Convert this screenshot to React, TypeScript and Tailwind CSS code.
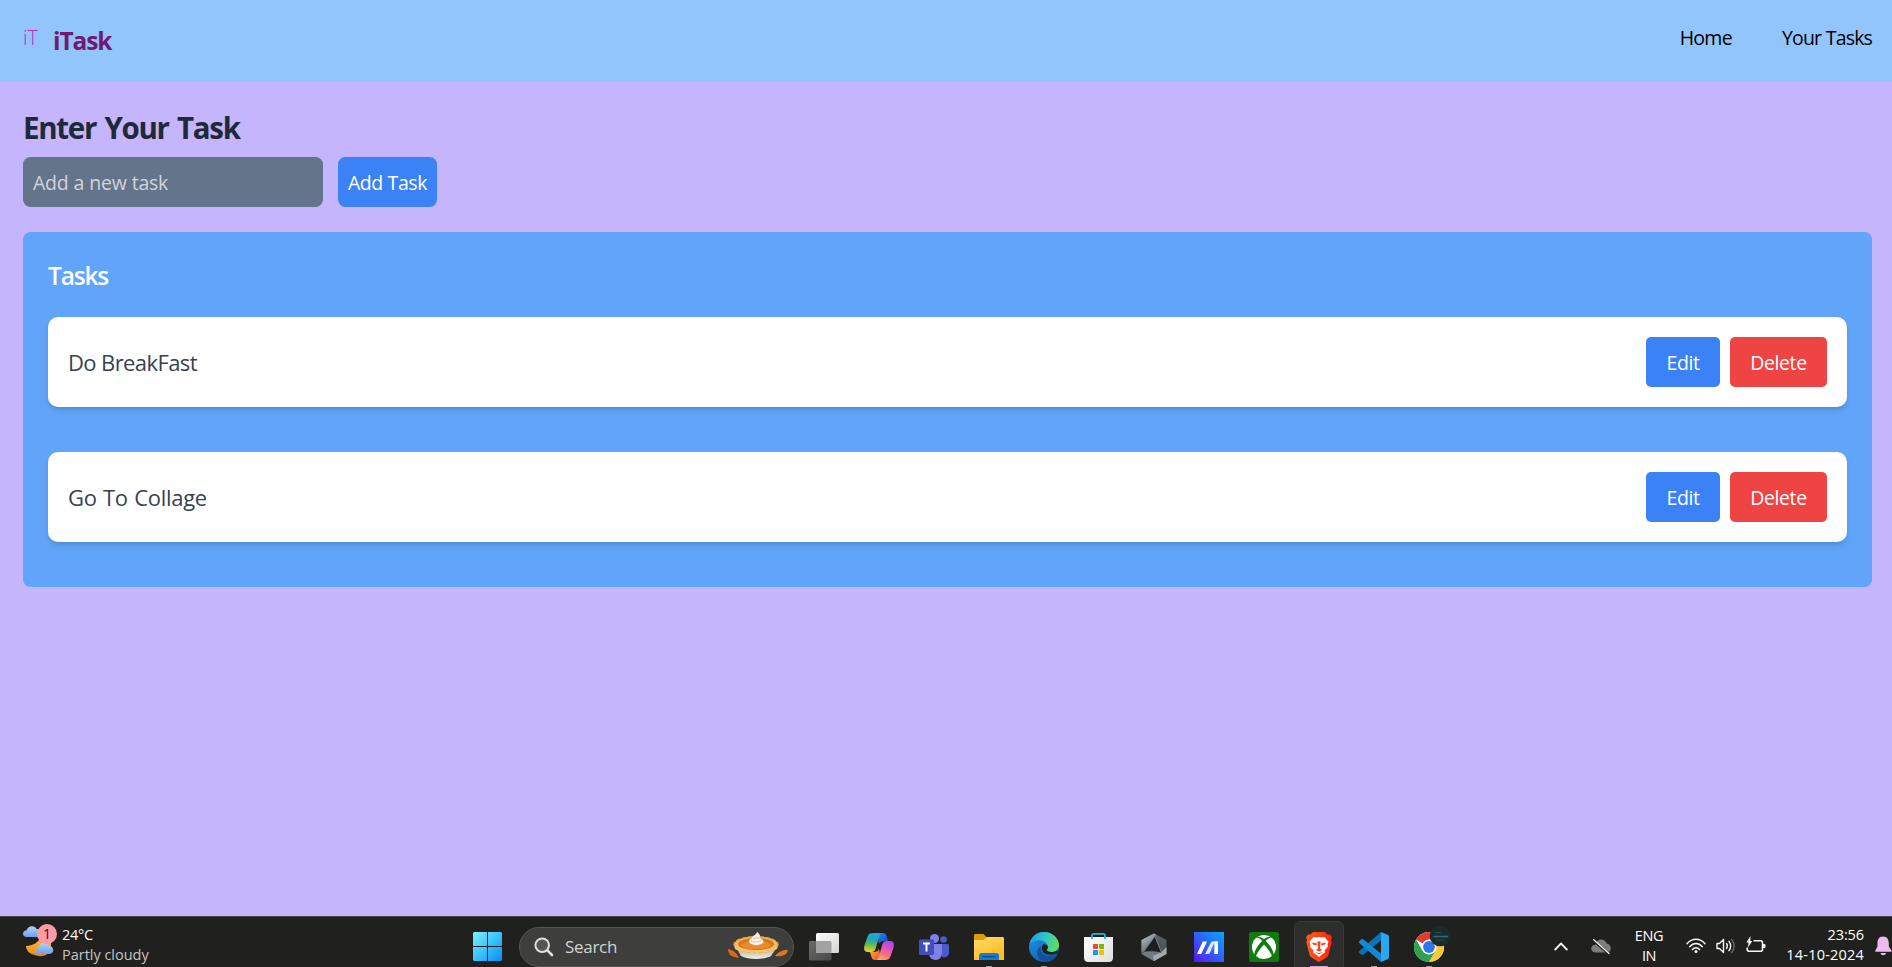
import { useState } from "react";
import type { ReactNode } from "react";

type Task = { id: number; title: string };

const initialTasks: Task[] = [
  { id: 1, title: "Do BreakFast" },
  { id: 2, title: "Go To Collage" },
];

function Navbar() {
  return (
    <nav className="flex h-[82px] shrink-0 justify-between bg-[#93c5fd] pl-[23px] pr-5">
      <div className="flex">
        <span className="w-[30px] pt-[23px] text-[20px] leading-[30px] font-light tracking-[-0.1px] text-[#c026d3]">iT</span>
        <span className="pt-[23px] text-[24.5px] leading-[35px] font-bold tracking-[-1.1px] text-[#701a75]">iTask</span>
      </div>
      <ul className="flex gap-[50px] pt-[23px] text-[19.5px] leading-[30px] text-black">
        <li className="tracking-[-0.7px]">Home</li>
        <li className="tracking-[-0.85px] [word-spacing:0.5px]">Your Tasks</li>
      </ul>
    </nav>
  );
}

function TaskRow({ task, onDelete }: { task: Task; onDelete: () => void }) {
  return (
    <li className="group flex h-[90px] items-center justify-between rounded-[10px] bg-white px-5 shadow-[0_5px_7.5px_-1px_rgba(0,0,0,0.1),0_2.5px_5px_-2.5px_rgba(0,0,0,0.1)]">
      <span className="text-[22px] leading-[35px] tracking-[-0.6px] text-[#374151] group-even:tracking-[-0.3px] group-even:[word-spacing:1px]">
        {task.title}
      </span>
      <div className="flex gap-2.5 text-[19.5px] text-white">
        <button className="h-[50px] w-[74px] rounded-[5px] bg-[#3b82f6] pt-[2px] tracking-[-0.4px]">Edit</button>
        <button className="h-[50px] w-[97px] rounded-[5px] bg-[#ef4444] pt-[2px] tracking-[-0.4px]" onClick={onDelete}>
          Delete
        </button>
      </div>
    </li>
  );
}

function Cell({ children, running = false, active = false }: { children: ReactNode; running?: boolean; active?: boolean }) {
  return (
    <div className="relative flex h-[50px] w-[55px] shrink-0 items-center pt-[10px] pl-[13px]">
      {active && <div className="absolute top-[4px] left-[3px] h-[50px] w-[50px] rounded-[6px] border border-[#3a3a38] bg-[#2d2d2b]" />}
      <svg viewBox="0 0 30 30" className="relative h-[30px] w-[30px] overflow-visible">
        {children}
      </svg>
      {running && <div className="absolute bottom-0 left-[25px] h-[1px] w-[6px] bg-[#9b9b9b]" />}
      {active && <div className="absolute bottom-0 left-[19px] h-[1px] w-[18px] bg-[#d59be0]" />}
    </div>
  );
}

function Gradients() {
  return (
    <svg className="absolute h-0 w-0">
      <defs>
        <linearGradient id="win" x1="0" y1="0" x2="29" y2="29" gradientUnits="userSpaceOnUse">
          <stop offset="0" stopColor="#7df0ff" /><stop offset="0.5" stopColor="#38c4fb" /><stop offset="1" stopColor="#0a8cf5" />
        </linearGradient>
        <linearGradient id="view" x1="0" y1="0" x2="1" y2="1"><stop offset="0" stopColor="#fff" /><stop offset="1" stopColor="#d4d4d4" /></linearGradient>
        <linearGradient id="viewBack" x1="0" y1="0" x2="1" y2="1"><stop offset="0" stopColor="#6c6c6c" /><stop offset="1" stopColor="#484848" /></linearGradient>
        <linearGradient id="copA" x1="0.4" y1="0" x2="0.3" y2="1">
          <stop offset="0" stopColor="#1ca4ee" /><stop offset="0.35" stopColor="#24a6b4" /><stop offset="0.65" stopColor="#6cbd4b" /><stop offset="1" stopColor="#f5d21c" />
        </linearGradient>
        <linearGradient id="copB" x1="0.7" y1="0" x2="0.3" y2="1">
          <stop offset="0" stopColor="#a34bea" /><stop offset="0.4" stopColor="#e554b6" /><stop offset="0.75" stopColor="#fb7576" /><stop offset="1" stopColor="#ffad61" />
        </linearGradient>
        <linearGradient id="copC" x1="0" y1="0" x2="1" y2="1"><stop offset="0" stopColor="#1b8fe8" /><stop offset="1" stopColor="#2140c9" /></linearGradient>
        <linearGradient id="copD" x1="0" y1="0" x2="1" y2="1"><stop offset="0" stopColor="#ffb12a" /><stop offset="1" stopColor="#ee4a3a" /></linearGradient>
        <linearGradient id="folder" x1="0" y1="0" x2="0.6" y2="1"><stop offset="0" stopColor="#ffdc6b" /><stop offset="1" stopColor="#fdbb1e" /></linearGradient>
        <linearGradient id="edgeTop" x1="0" y1="0.3" x2="1" y2="0.5"><stop offset="0" stopColor="#1d9de2" /><stop offset="0.5" stopColor="#2fc5c8" /><stop offset="1" stopColor="#66dc56" /></linearGradient>
        <linearGradient id="edgeLow" x1="0" y1="0" x2="0.6" y2="1"><stop offset="0" stopColor="#1f9be4" /><stop offset="1" stopColor="#0e5fb4" /></linearGradient>
        <linearGradient id="bag" x1="0" y1="0" x2="1" y2="1"><stop offset="0" stopColor="#fff" /><stop offset="1" stopColor="#dedede" /></linearGradient>
        <linearGradient id="hexA" x1="0" y1="0" x2="0" y2="1"><stop offset="0" stopColor="#5c6267" /><stop offset="0.6" stopColor="#4b5055" /><stop offset="1" stopColor="#8a929a" /></linearGradient>
        <linearGradient id="hexB" x1="0" y1="0" x2="0.6" y2="1"><stop offset="0" stopColor="#c3cad0" /><stop offset="1" stopColor="#585e64" /></linearGradient>
        <linearGradient id="asus" x1="0" y1="1" x2="1" y2="0"><stop offset="0" stopColor="#5b14f5" /><stop offset="0.5" stopColor="#2d62fa" /><stop offset="1" stopColor="#0aa6ff" /></linearGradient>
        <linearGradient id="brave" x1="0" y1="0" x2="1" y2="0"><stop offset="0" stopColor="#ff5a1c" /><stop offset="1" stopColor="#ff2610" /></linearGradient>
        <linearGradient id="moon" x1="0" y1="0" x2="0" y2="1"><stop offset="0" stopColor="#ffc531" /><stop offset="1" stopColor="#f0851e" /></linearGradient>
        <linearGradient id="cloud" x1="0" y1="0" x2="0" y2="1"><stop offset="0" stopColor="#b5d3fb" /><stop offset="1" stopColor="#6ea0ea" /></linearGradient>
        <linearGradient id="dish" x1="0" y1="0" x2="0" y2="1"><stop offset="0" stopColor="#b5a894" /><stop offset="1" stopColor="#f2eee4" /></linearGradient>
      </defs>
    </svg>
  );
}

function Weather() {
  return (
    <div className="flex w-[450px] shrink-0 pl-[22px]">
      <svg viewBox="0 0 36 36" className="mt-[6px] h-[36px] w-[36px]">
        <path d="M5 14C-.5 14 0 7.500 4.500 7.500C6 2 13 2 14.500 6C18 6 20 9 19 14Z" fill="url(#cloud)" />
        <path d="M4 23C10 23 18 19 18 14L29 15V27C25 34 17 34 13 32C7 31 4 27 4 23Z" fill="url(#moon)" />
        <path d="M18 31C12 31 12 25 16.500 25C18 18 26 18 27 23C32 23 33 30 28 31Z" fill="url(#cloud)" />
        <circle cx="25" cy="11" r="10" fill="#ff9aa6" />
        <text x="25" y="16" textAnchor="middle" fontSize="14" fontFamily="Open Sans" fill="#26181a">1</text>
      </svg>
      <div className="ml-1 pt-[8px] text-[14.500px] leading-[20px]">
        <p className="tracking-[-0.3px] text-white">24°C</p>
        <p className="tracking-[-0.02px] text-[#c4c4c4]">Partly cloudy</p>
      </div>
    </div>
  );
}

function SearchBox() {
  return (
    <div className="ml-[17px] flex h-[40px] w-[275px] shrink-0 items-center self-end rounded-full border border-[#565655] bg-[#3e3e3c] pl-[14px]">
      <svg viewBox="0 0 20 20" className="-mt-[1px] h-5 w-5" fill="none" stroke="#e0e0e0" strokeWidth="2">
        <circle cx="8.200" cy="8.200" r="6.800" fill="#555" />
        <path d="M13.200 13.200L18 18" strokeWidth="2.600" strokeLinecap="round" />
      </svg>
      <span className="ml-[11px] w-[163px] text-[17px] tracking-[-0.3px] text-[#d2d2d2]">Search</span>
      <svg viewBox="0 0 60 28" className="-mt-[3px] h-[28px] w-[60px]">
        <path d="M0 17C5 18 9 21 11 26C4 25 0 23 0 17Z" fill="#d9691c" />
        <path d="M47 24C51 19 55 18 60 18C59 23 54 25 47 24Z" fill="#e2731f" />
        <path d="M8 15L13 24C20 28 36 28 43 24L49 15Z" fill="url(#dish)" />
        <ellipse cx="28" cy="12.500" rx="22" ry="8" fill="#f0bd62" stroke="#d99a3c" strokeWidth="1.400" strokeDasharray="4 2" />
        <path d="M6 13C9 20 47 20 50 13L49 17C40 22 16 22 7 17Z" fill="#f5c76f" />
        <ellipse cx="28" cy="12" rx="18" ry="6" fill="#d8761c" />
        <ellipse cx="28" cy="13" rx="15" ry="4" fill="#e88b2d" />
        <path d="M21 10C21 7 23 7 24 6C24 3 28 4 29 0C33 3 32 5 32 6C35 7 36 9 35 11C31 14 24 14 21 10Z" fill="#f8f1e2" />
        <path d="M23 9C27 11 31 10 34 8M25 6C28 7 30 6 32 5" stroke="#d8c7aa" fill="none" />
      </svg>
    </div>
  );
}

function TaskbarApps() {
  return (
    <div className="ml-[2px] flex">
      <Cell>
        <rect x="7" y="1" width="23" height="20" rx="1.500" fill="url(#view)" />
        <path d="M1.500 9H7V21H22.500V27a1.500 1.500 0 0 1-1.500 1.500H1.500A1.500 1.500 0 0 1 0 27V10.500A1.500 1.500 0 0 1 1.500 9Z" fill="url(#viewBack)" />
        <path d="M7 9H21a1.500 1.500 0 0 1 1.500 1.500V21H7Z" fill="#a3a3a3" />
      </Cell>
      <Cell>
        <path d="M13 1H19C21 1 22 2 22.600 4L24 9H20C17 9 16 10 15 12Z" fill="url(#copC)" />
        <path d="M17 28H11C9 28 8 27 7.500 25L6 20H10C13 20 14 19 15 17Z" fill="url(#copD)" />
        <path d="M9 1H18C16.500 1 15.700 2.500 15 5L11.500 17C10.800 19 9.500 20 7.500 20H4C0 20-.5 17 .6 13L3.500 4.500C4.500 2 6 1 9 1Z" fill="url(#copA)" />
        <path d="M21 28H12C13.500 28 14.300 26.500 15 24L18.500 12C19.200 10 20.500 9 22.500 9H26C30 9 30.500 12 29.400 16L26.500 24.500C25.500 27 24 28 21 28Z" fill="url(#copB)" />
      </Cell>
      <Cell>
        <circle cx="24.500" cy="7.500" r="3.300" fill="#5059c9" />
        <path d="M19 12H28.500C29.500 12 30 12.700 30 13.500V20C30 24.500 27 26 23 25Z" fill="#4f58c8" />
        <circle cx="15.500" cy="6.500" r="4.500" fill="#7b83eb" />
        <path d="M10 12H21.500C22.500 12 23 12.700 23 13.500V20C23 25 20.500 28 16.500 28S10 25 10 21Z" fill="#7b83eb" />
        <rect x="0" y="7.500" width="15" height="15.500" rx="1.300" fill="#454eb8" />
        <path d="M4 11.500H11M7.500 11.500V19.500" stroke="#fff" strokeWidth="1.900" />
      </Cell>
      <Cell running>
        <path d="M0 3.500C0 2.500 .5 2 1.500 2H9.500L13 5.500V10H0Z" fill="#df9c09" />
        <path d="M0 8H9.500L13 5H28.500C29.500 5 30 5.500 30 6.500V28H0Z" fill="url(#folder)" />
        <path d="M5 28V23.500C5 22 6 21 7.500 21H22.500C24 21 25 22 25 23.500V28Z" fill="#147ed4" />
        <path d="M8.500 24.700H21.500" stroke="#0b4b8d" strokeWidth="1.400" />
      </Cell>
      <Cell running>
        <circle cx="15" cy="15" r="15" fill="url(#edgeLow)" />
        <path d="M.3 12.500C2 4.500 8 0 15 0C23.500 0 30 6.500 30 13C30 17.500 26.500 20 22.500 20C19 20 17.500 18.800 17.800 17.700C19 16.500 19.200 15 18.500 13.200C16.500 7.500 6 6 .3 12.500Z" fill="url(#edgeTop)" />
        <path d="M12 14C10 21 16 26.500 25 23.500C27.500 22.500 28.500 23 27 25C23 31 13 31.500 9.500 25.500C7 20 9 15.500 12 14Z" fill="#124f9c" />
        <path d="M14 12.500C16 12 18.500 12.500 18.900 15C19 16.500 18 17 17.800 17.800C17.700 19 19.500 20 22 20C25 20 27 19.500 28.500 18V21.500C23 23.500 15 23 13.500 19C12.500 16.500 12.700 14 14 12.500Z" fill="#20211e" />
      </Cell>
      <Cell>
        <path d="M0 5H29V25.500C29 28.500 27.500 30 24.500 30H4.500C1.500 30 0 28.500 0 25.500Z" fill="url(#bag)" />
        <path d="M8 7V3.500C8 2.500 8.700 1.800 9.700 1.800H19.300C20.300 1.800 21 2.500 21 3.500V7" fill="none" stroke="#2aaee4" strokeWidth="1.800" />
        <rect x="9" y="12" width="5" height="5" fill="#f25022" />
        <rect x="15" y="12" width="5" height="5" fill="#7fba00" />
        <rect x="9" y="18" width="5" height="5" fill="#00a4ef" />
        <rect x="15" y="18" width="5" height="5" fill="#ffb900" />
      </Cell>
      <Cell>
        <path d="M15 1.500L27.500 8V22L15 29L2.500 22V8Z" fill="url(#hexA)" />
        <path d="M13 2.500L15 1.500L17 2.500L16 5L5.500 19L2.500 20.500V8Z" fill="url(#hexB)" />
        <path d="M3 22L6 19.500L22 20.500L15 29Z" fill="#727a81" />
        <path d="M22 20.500L27.500 15V22L15 29L14 24Z" fill="#a0a9b2" />
        <path d="M16 4.500L22.500 20.500L13 18.500L5.500 19.500Z" fill="#1b1e22" />
        <path d="M16 4.500L22.500 20.500" stroke="#8d959c" strokeWidth=".8" />
      </Cell>
      <Cell>
        <rect width="30" height="30" fill="url(#asus)" />
        <path d="M3 22L8.800 9.500H13L7.200 22Z" fill="#fff" />
        <path d="M11 22L17.500 9.500H24V22H20.500V13L15 22Z" fill="#dfe8ff" />
        <path d="M19 13.500L20.500 10.500V18H17Z" fill="#3f78fb" />
        <path d="M20.500 9.500H24V22H20.500Z" fill="#fff" />
      </Cell>
      <Cell>
        <rect width="30" height="30" rx="2.500" fill="#107c10" />
        <circle cx="15" cy="15" r="12" fill="#fff" />
        <path d="M6.500 5.200C9.500 4 13 5.500 15 7C17 5.500 20.500 4 23.500 5.200C21 5 17.500 7.500 16.800 9C20.500 12.500 25.500 19.500 24.500 23.500L23 25C22.500 20.500 17 14.500 15 12.700C13 14.500 7.500 20.500 7 25L5.500 23.500C4.500 19.500 9.500 12.500 13.200 9C12.500 7.500 9 5 6.500 5.200Z" fill="#107c10" />
      </Cell>
      <Cell active>
        <path d="M9 0H21L23.500 2.500L26 2.500L28 5.500L27 8L27.700 10L24.500 22.500C24 24.500 22.500 25.500 21 26.500L15 30L9 26.500C7.500 25.500 6 24.500 5.500 22.500L2.300 10L3 8L2 5.500L4 2.500L6.500 2.500Z" fill="url(#brave)" />
        <path d="M9.500 5L12.500 5.500L15 5L17.500 5.500L20.500 5L24.500 9.800L23.500 12.500L24 14.500L20.500 18.500L21 20.500L18.500 22L15 25L11.500 22L9 20.500L9.500 18.500L6 14.500L6.500 12.500L5.500 9.800Z" fill="#fff" />
        <path d="M8 10.500L13 11.500L12.500 13.500L9 12.500ZM22 10.500L17 11.500L17.500 13.500L21 12.500ZM13.500 9L15 9.500L16.500 9L16 16.500L18 18L15 19.500L12 18L14 16.500ZM11 20L15 21L19 20L15 22.300Z" fill="#fb421d" />
      </Cell>
      <Cell running>
        <path d="M22 0V8.500L4.500 22.500C3.700 23.100 2.900 23 2.200 22.500L.5 21C-.2 20.300-.2 19.500.5 18.800Z" fill="#0873b8" />
        <path d="M22 30V21.500L4.500 7.500C3.700 6.900 2.900 7 2.200 7.500L.5 9C-.2 9.700-.2 10.500.5 11.200Z" fill="#1489d2" />
        <path d="M22 0L28.500 2.800C29.500 3.200 30 4 30 5V25C30 26 29.500 26.800 28.500 27.200L22 30Z" fill="#2aa7f2" />
      </Cell>
      <Cell running>
        <circle cx="15" cy="15" r="15" fill="#fff" />
        <path d="M15 15L2 7.500A15 15 0 0 1 28 7.500H15Z" fill="#e33b2e" />
        <path d="M15 7.500H28A15 15 0 0 1 15 30L21.500 18.700Z" fill="#fcc934" />
        <path d="M2 7.500A15 15 0 0 0 15 30L21.500 18.700L8.500 18.700Z" fill="#2da14c" />
        <circle cx="15" cy="15" r="7.500" fill="#fff" />
        <circle cx="15" cy="15" r="5.900" fill="#2f76e8" />
        <circle cx="26" cy="4" r="10.300" fill="#182c30" />
        <path d="M19.500 4.500H34" stroke="#2c6c7e" strokeWidth="1.600" />
        <path d="M20.500 .5H27M22 8H31" stroke="#2b474d" strokeWidth="1" />
      </Cell>
    </div>
  );
}

function SystemTray() {
  return (
    <div className="ml-auto flex text-[14.500px] leading-[20px] text-white">
      <svg viewBox="0 0 14 9" className="mt-[25px] h-[9px] w-[14px] shrink-0" fill="none" stroke="#f0f0f0" strokeWidth="1.800" strokeLinecap="round" strokeLinejoin="round">
        <path d="M1.200 7.500L7 1.500L12.800 7.500" />
      </svg>
      <svg viewBox="0 0 20 18" className="mt-[21px] ml-[23px] h-[18px] w-[20px] shrink-0">
        <path d="M5 14.500C-1 14.500-1.500 7 4.500 6.800C5.500 0 14 0 15.500 5.500C21 6 21.500 14.500 15.500 14.500Z" fill="#7d7d7d" />
        <path d="M3 3L18 16" stroke="#20211e" strokeWidth="2.400" />
        <path d="M2.500 1.500L18 15.500" stroke="#f4f4f4" strokeWidth="1.300" strokeLinecap="round" />
      </svg>
      <div className="ml-[20px] w-[36px] pt-[9px] text-center tracking-[-0.4px]">
        <p>ENG</p>
        <p>IN</p>
      </div>
      <svg viewBox="0 0 20 16" className="mt-[21px] ml-[19px] h-[16px] w-[20px] shrink-0" fill="none" stroke="#f4f4f4" strokeWidth="1.500" strokeLinecap="round">
        <path d="M1 5.700C6-.2 14-.2 19 5.700M3.700 8.700C7.500 4.400 12.500 4.400 16.300 8.700M6.400 11.500C8.500 9 11.500 9 13.600 11.500" />
        <circle cx="10" cy="13.600" r="1.500" fill="#f4f4f4" stroke="none" />
      </svg>
      <svg viewBox="0 0 20 18" className="mt-[20px] ml-[10px] h-[18px] w-[20px] shrink-0" fill="none" stroke="#f4f4f4" strokeWidth="1.400" strokeLinecap="round" strokeLinejoin="round">
        <path d="M1 6.500H3.500L7.500 2.500V15.500L3.500 11.500H1Z" />
        <path d="M10.500 6.500Q12.300 9 10.500 11.500M13 4.300Q16.300 9 13 13.700" />
        <path d="M15.700 2.300Q20.500 9 15.700 15.700" stroke="#666" />
      </svg>
      <svg viewBox="0 0 20 18" className="mt-[19px] ml-[10px] h-[18px] w-[20px] shrink-0" fill="none" stroke="#f4f4f4" strokeWidth="1.600">
        <path d="M7.500 4.800H14.500A2 2 0 0 1 16.500 6.800V13.200A2 2 0 0 1 14.500 15.200H3.200A2 2 0 0 1 1.200 13.200V11.500" />
        <path d="M16.500 8H18.500A1 1 0 0 1 19.500 9V11A1 1 0 0 1 18.500 12H16.500Z" fill="#f4f4f4" stroke="none" />
        <path d="M4.500 0L.3 6.500H2.500L2 11.500L6.300 5H4.300Z" fill="#f4f4f4" stroke="none" />
      </svg>
      <div className="ml-[16px] w-[82px] pt-[8px] text-right whitespace-nowrap">
        <p className="tracking-[-0.1px]">23:56</p>
        <p className="tracking-[0.2px]">14-10-2024</p>
      </div>
      <svg viewBox="0 0 17 20" className="mt-[19px] ml-[11px] h-[20px] w-[17px] shrink-0" fill="#edb9ee">
        <path d="M8 .5C3.500 .5 2.500 4 2.500 7V10.500L.3 14.500V15.700H16.500V14.500L13.800 10.500V7C13.800 4 12.500 .5 8 .5Z" />
        <path d="M5.500 17H11C10.500 20 6 20 5.500 17Z" />
      </svg>
    </div>
  );
}

function Taskbar() {
  return (
    <footer className="flex h-[51px] shrink-0 overflow-hidden border-t border-[#484846] bg-[#20211e]">
      <Gradients />
      <Weather />
      <svg viewBox="0 0 29 29" className="mt-[15px] ml-[23px] h-[29px] w-[29px] shrink-0" fill="url(#win)">
        <path d="M1 0H14V14H0V1ZM15 0H28L29 1V14H15ZM0 15H14V29H1L0 28ZM15 15H29V28L28 29H15Z" />
      </svg>
      <SearchBox />
      <TaskbarApps />
      <SystemTray />
    </footer>
  );
}

export default function App() {
  const [tasks, setTasks] = useState(initialTasks);
  const [draft, setDraft] = useState("");

  const addTask = () => {
    if (!draft.trim()) return;
    setTasks([...tasks, { id: Date.now(), title: draft }]);
    setDraft("");
  };

  return (
    <div className="flex h-screen flex-col overflow-hidden bg-[#c4b5fd] font-['Open_Sans','Noto_Sans',sans-serif]">
      <Navbar />
      <main className="min-h-0 flex-1 overflow-hidden pt-[26px] pr-5 pl-[23px]">
        <h1 className="text-[29.500px] leading-[40px] font-bold tracking-[-1.3px] text-[#1f2937] [word-spacing:2px]">Enter Your Task</h1>
        <div className="mt-[9px] flex gap-[15px] text-[19.500px]">
          <input
            value={draft}
            onChange={(e) => setDraft(e.target.value)}
            placeholder="Add a new task"
            className="h-[50px] w-[300px] rounded-[7.500px] bg-[#64748b] px-2.5 pt-[1px] tracking-[-0.3px] text-white outline-none [word-spacing:0.5px] placeholder:text-[#d1d5db]"
          />
          <button onClick={addTask} className="h-[50px] w-[99px] rounded-[7.500px] bg-[#3b82f6] pt-[2px] tracking-[-0.4px] text-white">
            Add Task
          </button>
        </div>
        <section className="mt-[25px] h-[355px] rounded-[7.500px] bg-[#60a5fa] p-[25px]">
          <h2 className="-mt-[1px] text-[24.500px] leading-[40px] font-semibold tracking-[-1.200px] text-white">Tasks</h2>
          <ul className="mt-[21px] flex flex-col gap-[45px]">
            {tasks.map((task) => (
              <TaskRow key={task.id} task={task} onDelete={() => setTasks(tasks.filter((t) => t.id !== task.id))} />
            ))}
          </ul>
        </section>
      </main>
      <Taskbar />
    </div>
  );
}
